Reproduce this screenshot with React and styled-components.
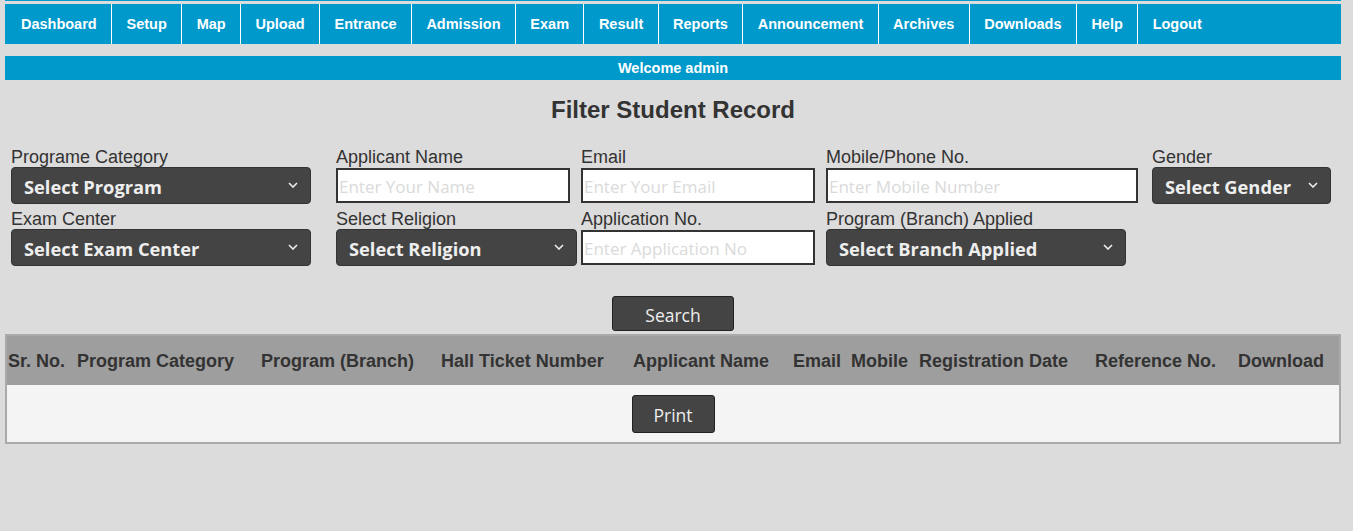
import React from "react";
import styled, { createGlobalStyle } from "styled-components";

const GlobalStyle = createGlobalStyle`
  body {
    margin: 0;
    background-color: #dcdcdc;
    font-family: "Liberation Sans", Arial, sans-serif;
  }
`;

const Page = styled.div`
  width: 1336px;
  margin-left: 5px;
  color: #333;
`;

const TopLine = styled.div`
  height: 1px;
  background-color: #0099cc;
  margin-bottom: 3px;
`;

const NavBar = styled.ul`
  display: flex;
  height: 40px;
  margin: 0;
  padding: 0 0 0 1.5px;
  list-style: none;
  background-color: #0099cc;
`;

const NavItem = styled.li`
  display: flex;
  align-items: center;
  padding: 0 14.43px;
  border-left: ${props => (props.first ? "none" : "1px solid #fff")};
  color: #fff;
  font-size: 14.5px;
  font-weight: bold;
`;

const WelcomeBar = styled.div`
  margin-top: 12px;
  height: 24px;
  line-height: 24px;
  background-color: #0099cc;
  color: #fff;
  font-size: 14.5px;
  font-weight: bold;
  text-align: center;
`;

const Title = styled.h2`
  margin: 15px 0 22px;
  line-height: 30px;
  font-size: 24px;
  font-weight: bold;
  text-align: center;
  color: #333;
`;

const FormGrid = styled.div`
  display: grid;
  grid-template-columns: 325px 245px 245px 326px 1fr;
  row-gap: 5px;
  padding-left: 6px;
`;

const Field = styled.div`
  display: flex;
  flex-direction: column;
  grid-column: ${props => props.col};
`;

const Label = styled.label`
  display: block;
  height: 20px;
  line-height: 20px;
  font-size: 18px;
  color: #333;
`;

const SelectWrap = styled.div`
  position: relative;
  width: ${props => props.w}px;
  height: 37px;
`;

const Select = styled.select`
  appearance: none;
  width: 100%;
  height: 100%;
  padding: 2px 0 0 12px;
  border: 1px solid #333;
  border-radius: 4px;
  background-color: #444;
  color: #eee;
  font-family: "Open Sans", sans-serif;
  font-size: 18.3px;
  font-weight: bold;
  outline: none;
`;

const Chevron = styled.svg`
  position: absolute;
  right: 13px;
  top: 15px;
  pointer-events: none;
`;

const Input = styled.input`
  box-sizing: border-box;
  width: ${props => props.w}px;
  height: 35px;
  margin-top: 1px;
  padding: 2px 1px 0;
  border: 2px solid #333;
  background-color: #fff;
  font-family: "Open Sans", sans-serif;
  font-size: 17px;
  outline: none;

  &::placeholder {
    color: #dadada;
  }
`;

const ButtonRow = styled.div`
  display: flex;
  justify-content: center;
  padding: ${props => props.pad};
`;

const DarkButton = styled.button`
  box-sizing: border-box;
  width: ${props => props.w}px;
  height: ${props => props.h}px;
  padding: 2px 0 0;
  border: 1px solid #222;
  border-radius: 3px;
  background-color: #444;
  color: #eee;
  font-family: "Open Sans", sans-serif;
  font-size: 17.5px;
`;

const Table = styled.table`
  width: 1336px;
  margin-top: 3px;
  border: 2px solid #aaa;
  border-collapse: separate;
  border-spacing: 0;
  table-layout: fixed;
`;

const HeadRow = styled.tr`
  height: 49px;
  background-color: #9e9e9e;
`;

const Th = styled.th`
  padding: 2px 0 0 1px;
  text-align: left;
  white-space: nowrap;
  font-size: 18px;
  font-weight: bold;
  color: #333;
`;

const BodyCell = styled.td`
  background-color: #f4f4f4;
  padding: 0;
`;

const SelectBox = ({ w, text }) => (
  <SelectWrap w={w}>
    <Select defaultValue="">
      <option value="">{text}</option>
    </Select>
    <Chevron width="10" height="6" viewBox="0 0 10 6">
      <path d="M1 1 L5 5 L9 1" fill="none" stroke="#eee" strokeWidth="1.6" />
    </Chevron>
  </SelectWrap>
);

const navLinks = [
  "Dashboard", "Setup", "Map", "Upload", "Entrance", "Admission", "Exam",
  "Result", "Reports", "Announcement", "Archives", "Downloads", "Help", "Logout"
];

const columns = [
  ["Sr. No.", 69], ["Program Category", 184], ["Program (Branch)", 180],
  ["Hall Ticket Number", 192], ["Applicant Name", 160], ["Email", 58],
  ["Mobile", 68], ["Registration Date", 176], ["Reference No.", 143],
  ["Download", 102]
];

export default function App() {
  return (
    <Page>
      <GlobalStyle />
      <TopLine />
      <NavBar>
        {navLinks.map((link, i) => (
          <NavItem key={link} first={i === 0}>
            {link}
          </NavItem>
        ))}
      </NavBar>
      <WelcomeBar>Welcome admin</WelcomeBar>
      <Title>Filter Student Record</Title>

      <FormGrid>
        <Field col={1}>
          <Label>Programe Category</Label>
          <SelectBox w={300} text="Select Program" />
        </Field>
        <Field col={2}>
          <Label>Applicant Name</Label>
          <Input w={234} placeholder="Enter Your Name" />
        </Field>
        <Field col={3}>
          <Label>Email</Label>
          <Input w={234} placeholder="Enter Your Email" />
        </Field>
        <Field col={4}>
          <Label>Mobile/Phone No.</Label>
          <Input w={312} placeholder="Enter Mobile Number" />
        </Field>
        <Field col={5}>
          <Label>Gender</Label>
          <SelectBox w={179} text="Select Gender" />
        </Field>

        <Field col={1}>
          <Label>Exam Center</Label>
          <SelectBox w={300} text="Select Exam Center" />
        </Field>
        <Field col={2}>
          <Label>Select Religion</Label>
          <SelectBox w={241} text="Select Religion" />
        </Field>
        <Field col={3}>
          <Label>Application No.</Label>
          <Input w={234} placeholder="Enter Application No" />
        </Field>
        <Field col={4}>
          <Label>Program (Branch) Applied</Label>
          <SelectBox w={300} text="Select Branch Applied" />
        </Field>
      </FormGrid>

      <ButtonRow pad="30px 0 0">
        <DarkButton w={122} h={35}>Search</DarkButton>
      </ButtonRow>

      <Table>
        <colgroup>
          {columns.map(([name, w]) => (
            <col key={name} style={{ width: w }} />
          ))}
        </colgroup>
        <thead>
          <HeadRow>
            {columns.map(([name]) => (
              <Th key={name}>{name}</Th>
            ))}
          </HeadRow>
        </thead>
        <tbody>
          <tr>
            <BodyCell colSpan={columns.length}>
              <ButtonRow pad="10px 0 9px">
                <DarkButton w={83} h={38}>Print</DarkButton>
              </ButtonRow>
            </BodyCell>
          </tr>
        </tbody>
      </Table>
    </Page>
  );
}
